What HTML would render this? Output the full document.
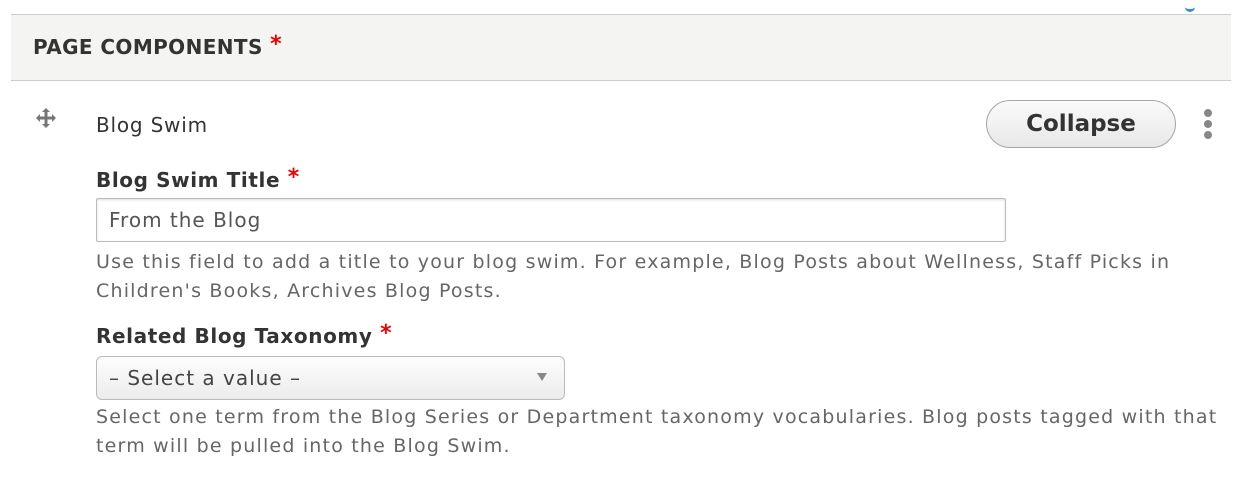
<!DOCTYPE html>
<html><head><meta charset="utf-8"><style>
html,body{margin:0;padding:0;width:1246px;height:478px;background:#fff;overflow:hidden;position:relative;font-family:"DejaVu Sans","Liberation Sans",sans-serif;color:#333}
.a{position:absolute;white-space:nowrap}
.req{color:#e00;font-weight:bold;letter-spacing:0}
</style></head><body>
<div class="a" style="left:1185px;top:5px;width:10px;height:4px;border-bottom:3px solid #3b8bd6;border-radius:0 0 6px 6px"></div>
<div class="a" style="left:11px;top:14px;width:1220px;height:65px;background:#f4f4f2;border-top:1px solid #ccc;border-bottom:1px solid #ccc"></div>
<div class="a" style="left:33px;top:35px;font-size:20px;letter-spacing:0.4px;font-weight:bold;color:#333">PAGE COMPONENTS <span class="req" style="font-size:22px;position:relative;top:-3px">*</span></div>
<svg class="a" style="left:35px;top:107px" width="22" height="22" viewBox="0 0 22 22"><path d="M11 1 L15 5 H12.5 V9.5 H17 V7 L21 11 L17 15 V12.5 H12.5 V17 H15 L11 21 L7 17 H9.5 V12.5 H5 V15 L1 11 L5 7 V9.5 H9.5 V5 H7 Z" fill="#777"/></svg>
<div class="a" style="left:96px;top:113px;font-size:20px;letter-spacing:0.8px;color:#333">Blog Swim</div>
<div class="a" style="left:986px;top:100px;width:190px;height:48px;border:1px solid #a6a6a6;border-radius:24px;background:linear-gradient(#fafafa,#e8e8e8);box-sizing:border-box;text-align:center;line-height:46px;font-size:23px;font-weight:bold;color:#333">Collapse</div>
<div class="a" style="left:1204px;top:109px;width:8px;height:8px;border-radius:4px;background:#888"></div>
<div class="a" style="left:1204px;top:120px;width:8px;height:8px;border-radius:4px;background:#888"></div>
<div class="a" style="left:1204px;top:131px;width:8px;height:8px;border-radius:4px;background:#888"></div>
<div class="a" style="left:96px;top:168px;font-size:20px;letter-spacing:0.6px;font-weight:bold;color:#333">Blog Swim Title <span class="req" style="font-size:22px;position:relative;top:-3px">*</span></div>
<div class="a" style="left:96px;top:198px;width:910px;height:44px;border:1px solid #bbb;border-radius:2px;box-sizing:border-box;background:#fff;box-shadow:inset 0 1px 2px #ddd;font-size:20px;letter-spacing:1px;line-height:42px;padding-left:12px;color:#555">From the Blog</div>
<div class="a" style="left:96px;top:248px;font-size:19px;letter-spacing:1.2px;line-height:29px;color:#666">Use this field to add a title to your blog swim. For example, Blog Posts about Wellness, Staff Picks in<br>Children's Books, Archives Blog Posts.</div>
<div class="a" style="left:96px;top:324px;font-size:20px;letter-spacing:0.6px;font-weight:bold;color:#333">Related Blog Taxonomy <span class="req" style="font-size:22px;position:relative;top:-3px">*</span></div>
<div class="a" style="left:96px;top:356px;width:469px;height:44px;border:1px solid #bbb;border-radius:6px;box-sizing:border-box;background:linear-gradient(#fdfdfd,#ececec);font-size:20px;letter-spacing:1px;line-height:42px;padding-left:12px;color:#444">– Select a value –</div>
<div class="a" style="left:537px;top:373px;width:0;height:0;border-left:5px solid transparent;border-right:5px solid transparent;border-top:8px solid #888"></div>
<div class="a" style="left:96px;top:403px;font-size:19px;letter-spacing:1.2px;line-height:29px;color:#666">Select one term from the Blog Series or Department taxonomy vocabularies. Blog posts tagged with that<br>term will be pulled into the Blog Swim.</div>
</body></html>
